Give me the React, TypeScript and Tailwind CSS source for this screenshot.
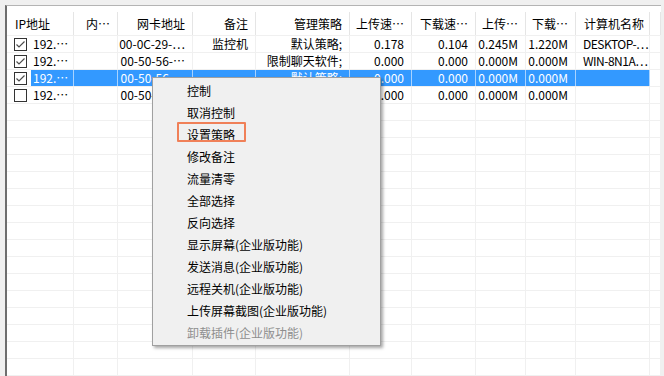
const FONT = { fontFamily: '"Noto Sans CJK SC", "Noto Sans", sans-serif' }

type Col = { title: string; w: string; left?: boolean }

const cols: Col[] = [
  { title: 'IP地址', w: 'w-[67px]', left: true },
  { title: '内…', w: 'w-[44px]' },
  { title: '网卡地址', w: 'w-[75px]' },
  { title: '备注', w: 'w-[63px]' },
  { title: '管理策略', w: 'w-[94px]' },
  { title: '上传速…', w: 'w-[62px]' },
  { title: '下载速…', w: 'w-[64px]' },
  { title: '上传…', w: 'w-[50px]' },
  { title: '下载…', w: 'w-[50px]' },
  { title: '计算机名称', w: 'w-[74px]', left: true },
]

const rows = [
  { checked: true, cells: ['192.…', '', '00-0C-29-…', '监控机', '默认策略;', '0.178', '0.104', '0.245M', '1.220M', 'DESKTOP-…'] },
  { checked: true, cells: ['192.…', '', '00-50-56-…', '', '限制聊天软件;', '0.000', '0.000', '0.000M', '0.000M', 'WIN-8N1A…'] },
  { checked: true, selected: true, cells: ['192.…', '', '00-50-56-…', '', '默认策略;', '0.000', '0.000', '0.000M', '0.000M', ''] },
  { checked: false, cells: ['192.…', '', '00-50-56-…', '', '默认策略;', '0.000', '0.000', '0.000M', '0.000M', ''] },
]

const menu = [
  '控制',
  '取消控制',
  '设置策略',
  '修改备注',
  '流量清零',
  '全部选择',
  '反向选择',
  '显示屏幕(企业版功能)',
  '发送消息(企业版功能)',
  '远程关机(企业版功能)',
  '上传屏幕截图(企业版功能)',
]

function CheckBox({ checked }: { checked: boolean }) {
  return (
    <span className="w-[13px] h-[13px] border border-[#333] bg-white flex items-center justify-center shrink-0">
      {checked && (
        <svg width="11" height="11" viewBox="0 0 11 11">
          <path d="M1.5 5.5 L4 8 L9.5 2.5" fill="none" stroke="#4d4d4d" strokeWidth="1.2" />
        </svg>
      )}
    </span>
  )
}

export default function App() {
  return (
    <div className="w-[664px] h-[376px] bg-[#f0f0f0] pt-[5px] pl-[5px] pr-[3px] overflow-hidden text-[12px] text-black" style={FONT}>
      <div className="relative h-full bg-white border-t border-[#b4b4b4] border-l-2 border-l-[#6e6e6e] pt-[6px] overflow-hidden">
        {/* header */}
        <div className="flex h-[24px] border-b border-[#f0f0f0]">
          {cols.map((c) => (
            <div
              key={c.title}
              className={`${c.w} shrink-0 border-r border-[#e5e5e5] flex items-center ${c.left ? 'justify-start pl-[8px]' : 'justify-end pr-[7px]'}`}
            >
              {c.title}
            </div>
          ))}
          <div className="w-[11px] shrink-0 border-r border-[#e5e5e5]" />
        </div>

        {rows.map((r, i) => (
          <div key={i} className="flex h-[17px] border-b border-[#f0f0f0] leading-[16px]">
            {r.cells.map((v, j) => {
              const c = cols[j]
              const sel = r.selected
              if (j === 0) {
                return (
                  <div key={j} className={`${c.w} shrink-0 border-r ${sel ? 'border-[#a9d3ff]' : 'border-[#f0f0f0]'} flex items-center`}>
                    <span className="pl-[7px] pr-[4px] flex items-center h-full bg-white">
                      <CheckBox checked={r.checked} />
                    </span>
                    <span className={`flex-1 h-full pl-[2px] ${sel ? 'bg-[#3399ff] text-white' : ''}`}>{v}</span>
                  </div>
                )
              }
              return (
                <div
                  key={j}
                  className={`${c.w} shrink-0 border-r whitespace-nowrap ${sel ? 'bg-[#3399ff] text-white border-[#a9d3ff]' : 'border-[#f0f0f0]'} ${c.left ? 'text-left pl-[7px] tracking-[-0.5px]' : 'text-right pr-[7px]'}`}
                >
                  {v}
                </div>
              )
            })}
            <div className={`w-[11px] shrink-0 border-r border-[#f0f0f0]`} />
          </div>
        ))}

        {Array.from({ length: 17 }).map((_, i) => (
          <div key={'e' + i} className="flex h-[17px] border-b border-[#f0f0f0]">
            {cols.map((c) => (
              <div key={c.title} className={`${c.w} shrink-0 border-r border-[#f0f0f0]`} />
            ))}
            <div className="w-[11px] shrink-0 border-r border-[#f0f0f0]" />
          </div>
        ))}
      </div>

      {/* context menu */}
      <div className="absolute left-[152px] top-[77px] w-[229px] bg-[#f0f0f0] border border-[#a0a0a0] pt-[2px] pb-[1px] shadow-[2px_2px_3px_rgba(0,0,0,0.35)]">
        {menu.map((m) => (
          <div key={m} className="relative h-[22px] leading-[22px] pl-[34px] whitespace-nowrap">
            {m}
            {m === '设置策略' && (
              <span className="absolute left-[24px] top-[-2px] w-[69px] h-[20px] border-2 border-[#f08058] rounded-[1px]" />
            )}
          </div>
        ))}
        <div className="h-[22px] leading-[22px] pl-[34px] whitespace-nowrap text-[#8e8e8e]">卸载插件(企业版功能)</div>
      </div>
    </div>
  )
}
